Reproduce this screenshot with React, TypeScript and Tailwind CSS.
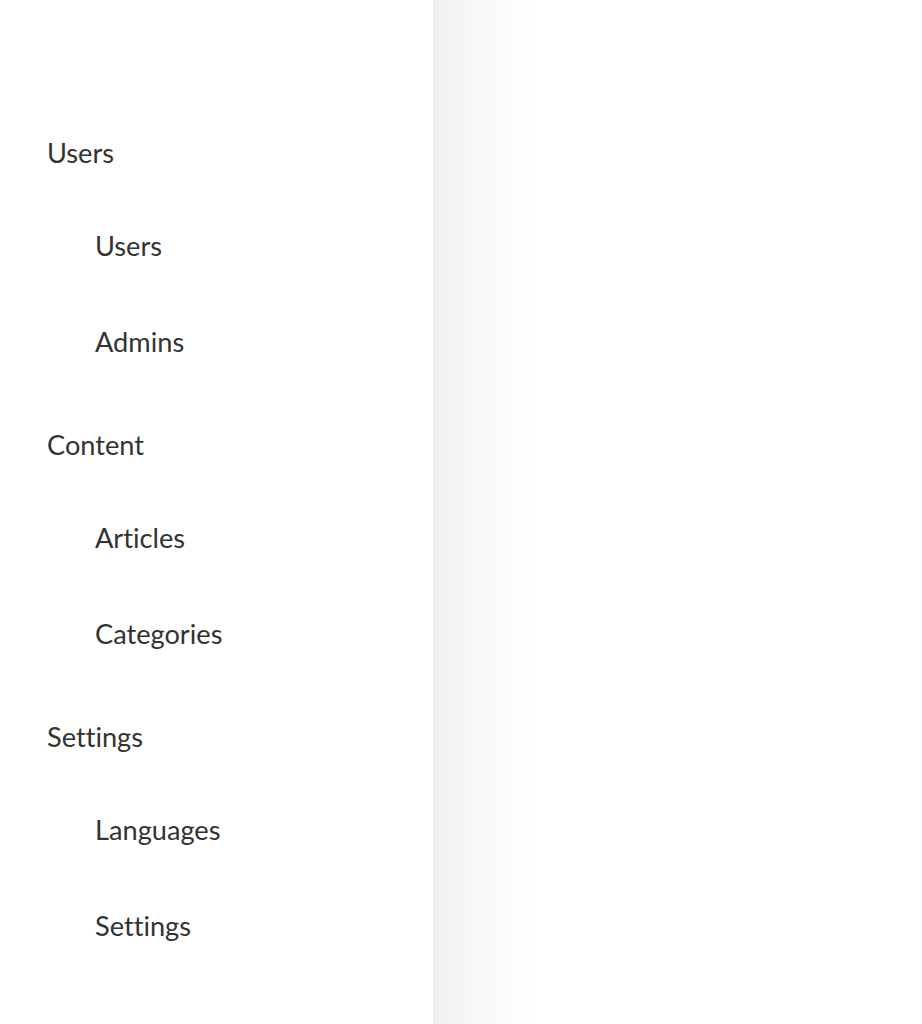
const groups = [
  { title: 'Users', items: ['Users', 'Admins'] },
  { title: 'Content', items: ['Articles', 'Categories'] },
  { title: 'Settings', items: ['Languages', 'Settings'] },
]

export default function App() {
  return (
    <div className="flex h-[1024px] w-full bg-white font-['Lato',sans-serif] text-[#333333] [font-variant-ligatures:none]">
      <nav className="w-[433px] shrink-0 bg-white pt-[139px]">
        {groups.map((group) => (
          <div key={group.title} className="pb-[7px]">
            <div className="h-[93px] pl-[47px] text-[27.2px] leading-none">{group.title}</div>
            {group.items.map((item) => (
              <div key={item} className="h-[96px] pl-[95px] text-[27.2px] leading-none">
                {item}
              </div>
            ))}
          </div>
        ))}
      </nav>
      <main className="flex-1 bg-[linear-gradient(to_right,#eeeeee_0px,#f7f7f7_35px,#ffffff_100px)]" />
    </div>
  )
}
